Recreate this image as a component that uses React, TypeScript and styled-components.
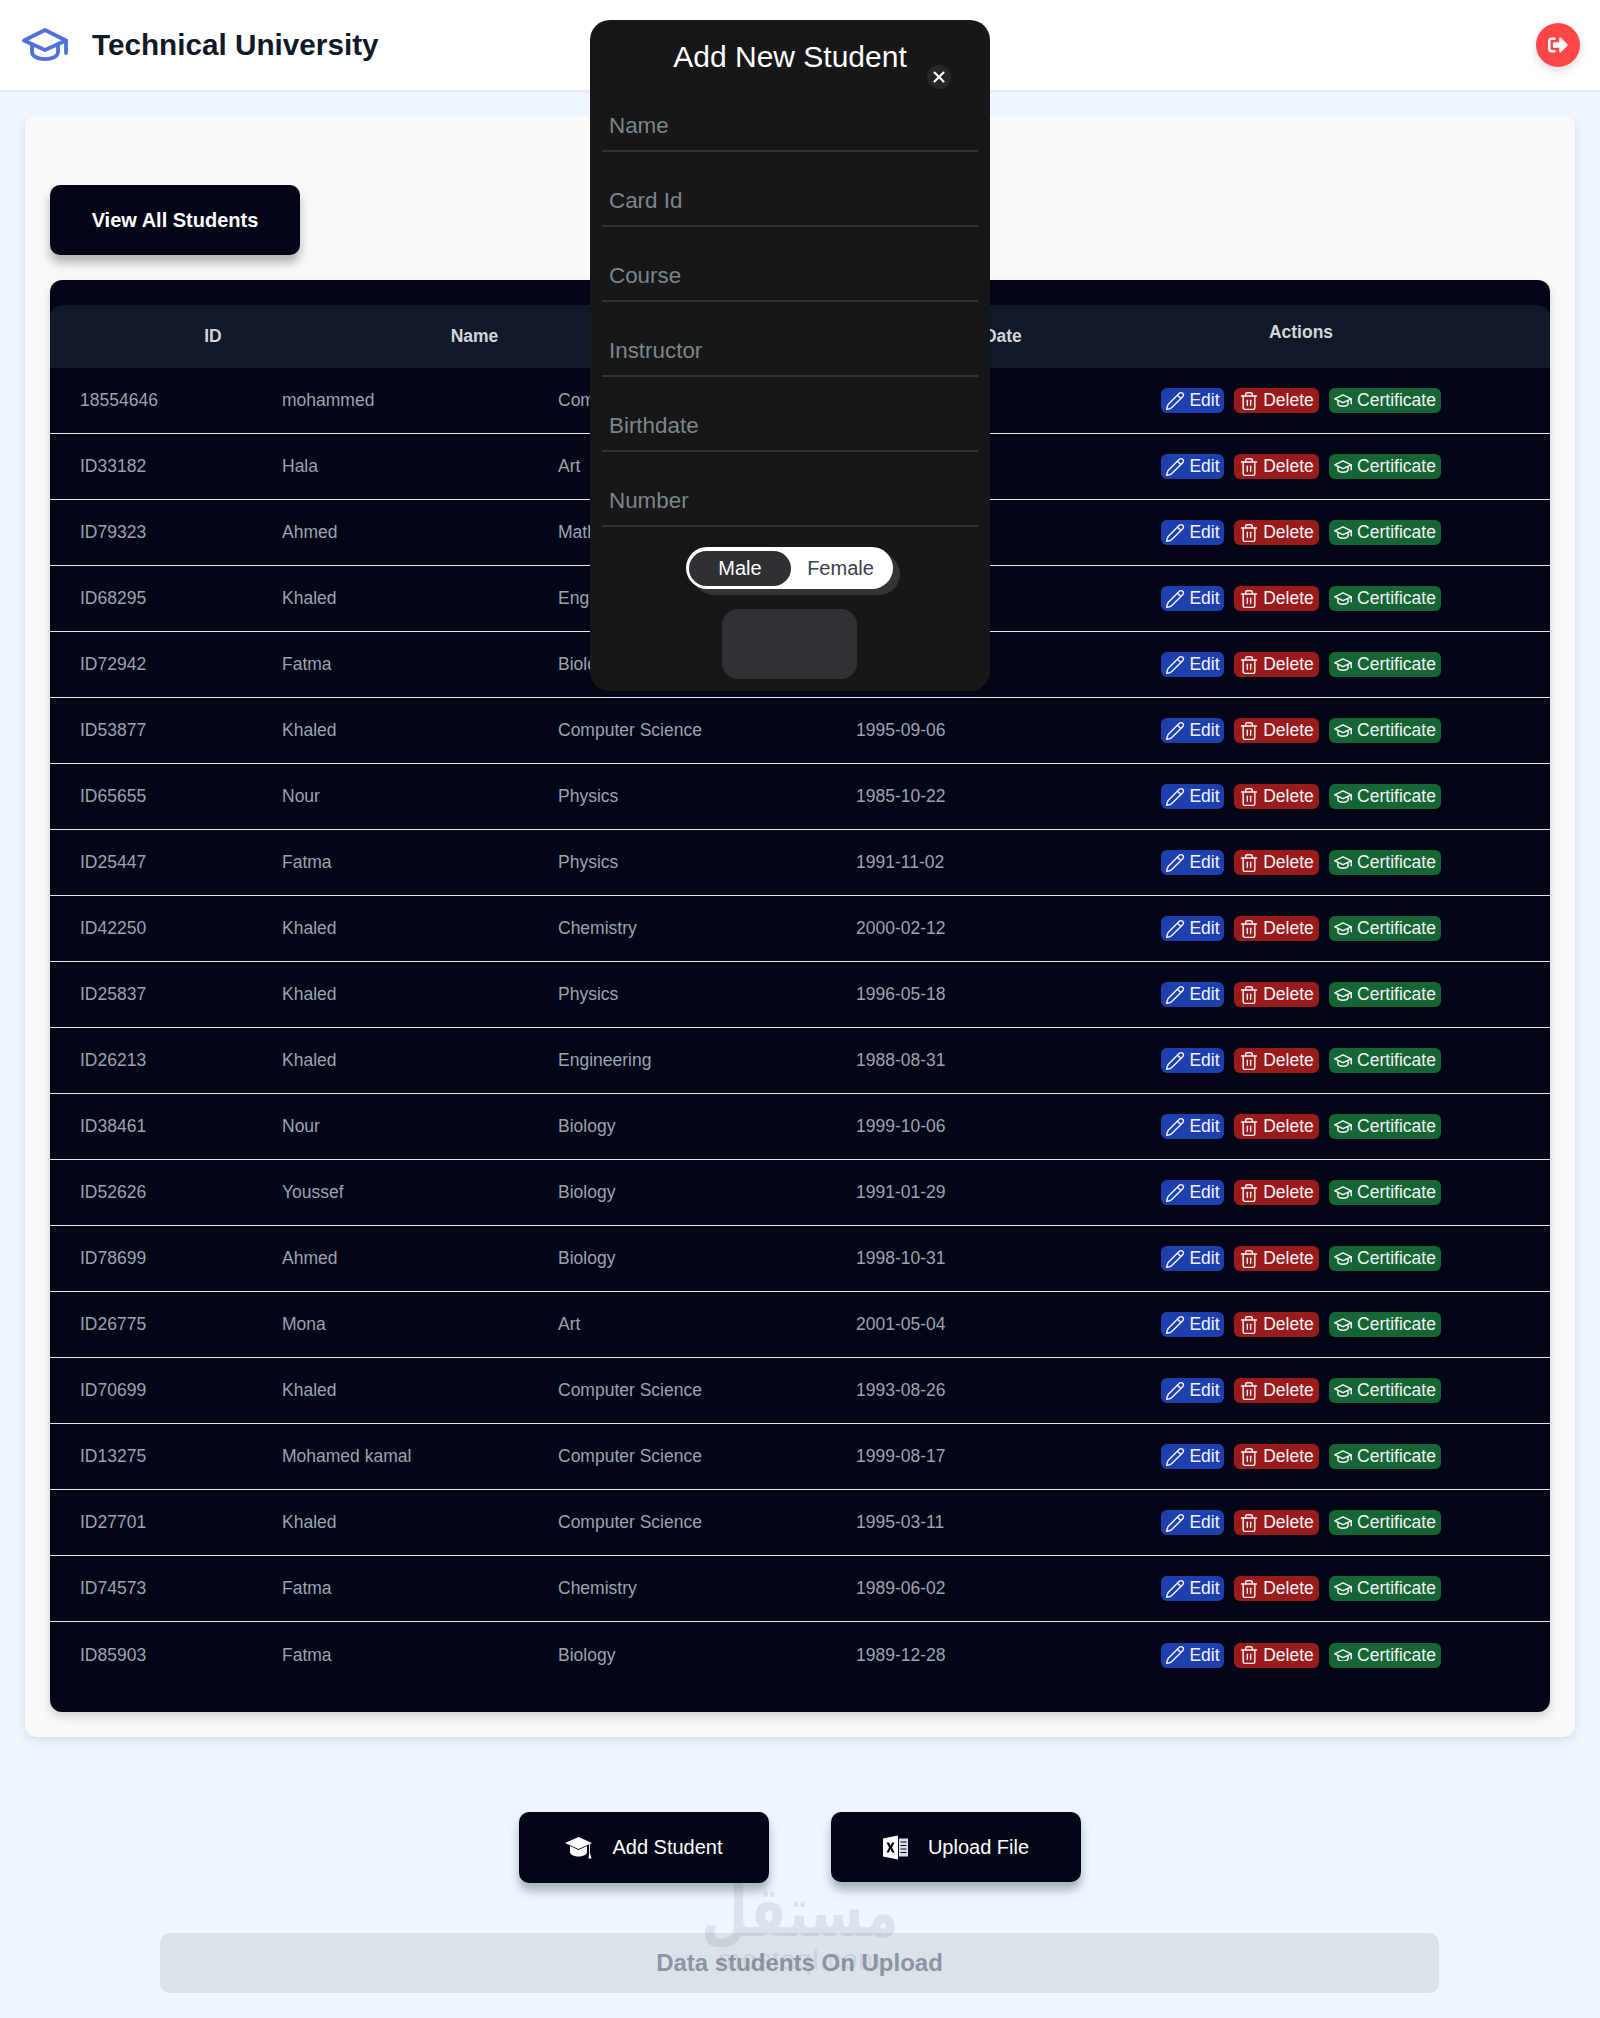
import React from 'react';
import styled, { createGlobalStyle } from 'styled-components';
import { Pencil, Trash2, X } from 'lucide-react';
import { FaSignOutAlt } from 'react-icons/fa';

const GlobalStyle = createGlobalStyle`
    html, body {
        margin: 0;
        padding: 0;
        background: #eff6ff;
        font-family: 'Liberation Sans', Arial, sans-serif;
    }
    * {
        box-sizing: border-box;
    }
`;

const Page = styled.div`
    position: relative;
    width: 1600px;
    height: 2018px;
    overflow: hidden;
    background: #eff6ff;
`;

const Header = styled.header`
    height: 90px;
    display: flex;
    align-items: center;
    justify-content: space-between;
    padding: 0 20px 0 22px;
    background: #ffffff;
    box-shadow: 0 1px 3px rgba(100, 120, 160, 0.16);
`;

const Brand = styled.div`
    display: flex;
    align-items: center;
    gap: 24px;
    color: #111827;
    font-size: 29.7px;
    font-weight: 700;
`;

const LogoutButton = styled.button`
    width: 44px;
    height: 44px;
    display: flex;
    align-items: center;
    justify-content: center;
    padding: 0;
    border: 0;
    border-radius: 50%;
    color: #ffffff;
    font-size: 20px;
    background: #ff4649;
    box-shadow: 0 4px 8px rgba(0, 0, 0, 0.14);
`;

const Main = styled.main`
    padding: 25px 25px 0;
`;

const Card = styled.section`
    padding: 70px 25px 25px;
    border-radius: 12px;
    background: #f9f9f9;
    box-shadow: 0 4px 10px rgba(30, 60, 110, 0.12);
`;

const DarkButton = styled.button<{ $height?: number }>`
    width: 250px;
    height: ${(p) => p.$height || 70}px;
    display: flex;
    align-items: center;
    justify-content: center;
    border: 0;
    border-radius: 10px;
    color: #ffffff;
    font-family: inherit;
    font-size: 20px;
    background: #020617;
    box-shadow: 0 8px 10px rgba(40, 50, 60, 0.34);
`;

const ViewAllButton = styled(DarkButton)`
    font-weight: 700;
`;

const TableBox = styled.div`
    margin-top: 25px;
    padding: 25px 0 24px;
    border-radius: 12px;
    background: #020617;
    box-shadow: 0 5px 10px rgba(0, 0, 0, 0.16);
`;

const HeadRow = styled.div`
    height: 63px;
    display: grid;
    grid-template-columns: 326px 197px 290px 234px 408px;
    align-items: center;
    border-radius: 12px 12px 0 0;
    color: #d1d5db;
    font-size: 17.5px;
    font-weight: 700;
    background: #111827;
`;

const HeadCell = styled.div<{ $raised?: boolean }>`
    text-align: center;
    padding-bottom: ${(p) => (p.$raised ? 8 : 0)}px;
`;

const Row = styled.div<{ $last: boolean }>`
    height: 66px;
    display: grid;
    grid-template-columns: 202px 276px 298px 305px 1fr;
    align-items: center;
    border-bottom: ${(p) => (p.$last ? '0' : '1px solid #e5e7eb')};
    color: #9ca3af;
    font-size: 17.5px;
`;

const Cell = styled.div`
    padding-left: 30px;
    white-space: nowrap;
`;

const Actions = styled(Cell)`
    display: flex;
    gap: 10px;
`;

const ActionButton = styled.span<{ $bg: string; $width: number; $gap?: number }>`
    width: ${(p) => p.$width}px;
    height: 25px;
    display: flex;
    align-items: center;
    justify-content: center;
    gap: ${(p) => p.$gap || 4}px;
    border-radius: 6px;
    color: #f3f4f6;
    background: ${(p) => p.$bg};
`;

const BottomButtons = styled.div`
    display: flex;
    justify-content: center;
    align-items: flex-start;
    gap: 62px;
    margin-top: 75px;
`;

const IconLabel = styled.span`
    display: flex;
    align-items: center;
    gap: 20px;
`;

const StatusBar = styled.div`
    width: 1279px;
    height: 60px;
    display: flex;
    align-items: center;
    justify-content: center;
    margin: 50px 0 0 160px;
    border-radius: 10px;
    color: #8b95a3;
    font-size: 24px;
    font-weight: 700;
    background: #dce2ea;
`;

const Watermark = styled.div`
    position: absolute;
    left: 690px;
    top: 1878px;
    width: 220px;
    color: #6b7280;
    text-align: center;
    opacity: 0.14;
    pointer-events: none;
`;

const WatermarkWord = styled.div`
    font-family: 'DejaVu Sans', sans-serif;
    font-size: 54px;
    font-weight: 700;
    line-height: 70px;
    transform: scaleY(1.3);
`;

const WatermarkUrl = styled.div`
    font-size: 27px;
    letter-spacing: 1px;
    line-height: 24px;
`;

const Modal = styled.div`
    position: absolute;
    left: 590px;
    top: 20px;
    width: 400px;
    height: 671px;
    padding: 0 12px;
    border-radius: 20px;
    background: #171717;
`;

const ModalTitle = styled.h2`
    margin: 0;
    padding-top: 20px;
    height: 57px;
    color: #ffffff;
    font-size: 30px;
    font-weight: 400;
    line-height: 34px;
    text-align: center;
`;

const CloseButton = styled.span`
    position: absolute;
    left: 337px;
    top: 45px;
    width: 24px;
    height: 24px;
    display: flex;
    align-items: center;
    justify-content: center;
    border-radius: 50%;
    color: #ffffff;
    background: #26262a;
`;

const Field = styled.div`
    height: 75px;
    display: flex;
    align-items: flex-end;
    padding: 0 7px 10px;
    border-bottom: 2px solid #333333;
    color: #7b868c;
    font-size: 22.4px;
    line-height: 28px;
`;

const GenderToggle = styled.div`
    width: 207px;
    height: 42px;
    display: flex;
    align-items: center;
    margin: 20px 0 0 84px;
    padding: 0 3px;
    border-radius: 21px;
    background: #ffffff;
    box-shadow: 7px 6px 0 #333436;
`;

const GenderOption = styled.span<{ $active?: boolean }>`
    height: 35px;
    display: flex;
    align-items: center;
    justify-content: center;
    flex: ${(p) => (p.$active ? '0 0 102px' : '1')};
    border-radius: 18px;
    color: ${(p) => (p.$active ? '#ffffff' : '#374151')};
    font-size: 20px;
    background: ${(p) => (p.$active ? '#2f3033' : 'transparent')};
`;

const SubmitButton = styled.div`
    width: 135px;
    height: 70px;
    margin: 20px 0 0 120px;
    border-radius: 16px;
    background: #303134;
`;

const CapOutline = ({ size, width, color }: { size: number; width: number; color: string }) => (
    <svg width={size} height={size * 0.72} viewBox="0 0 46 33" fill="none" stroke={color} strokeWidth={width} strokeLinecap="round" strokeLinejoin="round">
        <path d="M23 2 L44 12.5 L23 22 L2 12.5 Z" />
        <path d="M10 17 V24 C10 28.5 16 31 23 31 C30 31 36 28.5 36 24 V17" />
        <path d="M44 12.5 V25" />
    </svg>
);

const CapSolid = () => (
    <svg width="27" height="22" viewBox="0 0 27 22" fill="#ffffff">
        <path d="M13.5 0 L27 6 L13.5 12 L0 6 Z" />
        <path d="M5 9 L13.5 13 L22 9 V15 C22 18 17 19.5 13.5 19.5 C10 19.5 5 18 5 15 Z" />
        <path d="M24 7.5 L25 7 V16 L26.5 21.5 H23.5 L24.2 16 Z" />
    </svg>
);

const ExcelIcon = () => (
    <svg width="25" height="25" viewBox="0 0 25 25">
        <path d="M0 3.5 L15 0.5 V24.5 L0 21.5 Z" fill="#ffffff" />
        <path d="M3.5 7.5 H6.2 L7.6 10.8 L9.1 7.5 H11.6 L9 12.4 L11.7 17.5 H9 L7.5 14.1 L5.9 17.5 H3.4 L6.1 12.4 Z" fill="#020617" />
        <rect x="16" y="3.5" width="9" height="18" fill="#d9dde3" />
        <path d="M17.5 7 H23.5 M17.5 10.5 H23.5 M17.5 14 H23.5 M17.5 17.5 H23.5" stroke="#020617" strokeWidth="1.2" />
    </svg>
);

const students = [
    ['18554646', 'mohammed', 'Computer Science', '1990-04-12'],
    ['ID33182', 'Hala', 'Art', '1994-07-21'],
    ['ID79323', 'Ahmed', 'Mathematics', '1987-03-15'],
    ['ID68295', 'Khaled', 'Engineering', '1992-12-09'],
    ['ID72942', 'Fatma', 'Biology', '1997-06-30'],
    ['ID53877', 'Khaled', 'Computer Science', '1995-09-06'],
    ['ID65655', 'Nour', 'Physics', '1985-10-22'],
    ['ID25447', 'Fatma', 'Physics', '1991-11-02'],
    ['ID42250', 'Khaled', 'Chemistry', '2000-02-12'],
    ['ID25837', 'Khaled', 'Physics', '1996-05-18'],
    ['ID26213', 'Khaled', 'Engineering', '1988-08-31'],
    ['ID38461', 'Nour', 'Biology', '1999-10-06'],
    ['ID52626', 'Youssef', 'Biology', '1991-01-29'],
    ['ID78699', 'Ahmed', 'Biology', '1998-10-31'],
    ['ID26775', 'Mona', 'Art', '2001-05-04'],
    ['ID70699', 'Khaled', 'Computer Science', '1993-08-26'],
    ['ID13275', 'Mohamed kamal', 'Computer Science', '1999-08-17'],
    ['ID27701', 'Khaled', 'Computer Science', '1995-03-11'],
    ['ID74573', 'Fatma', 'Chemistry', '1989-06-02'],
    ['ID85903', 'Fatma', 'Biology', '1989-12-28'],
];

const fields = ['Name', 'Card Id', 'Course', 'Instructor', 'Birthdate', 'Number'];

const App = () => (
    <Page>
        <GlobalStyle />
        <Header>
            <Brand>
                <CapOutline size={46} width={3.8} color="#4f71d9" />
                Technical University
            </Brand>
            <LogoutButton>
                <FaSignOutAlt />
            </LogoutButton>
        </Header>
        <Main>
            <Card>
                <ViewAllButton>View All Students</ViewAllButton>
                <TableBox>
                    <HeadRow>
                        <HeadCell>ID</HeadCell>
                        <HeadCell>Name</HeadCell>
                        <HeadCell>Course</HeadCell>
                        <HeadCell>Birth Date</HeadCell>
                        <HeadCell $raised>Actions</HeadCell>
                    </HeadRow>
                    {students.map((s, i) => (
                        <Row key={s[0]} $last={i === students.length - 1}>
                            <Cell>{s[0]}</Cell>
                            <Cell>{s[1]}</Cell>
                            <Cell>{s[2]}</Cell>
                            <Cell>{s[3]}</Cell>
                            <Actions>
                                <ActionButton $bg="#1e40af" $width={63}>
                                    <Pencil size={20} strokeWidth={1.7} />
                                    Edit
                                </ActionButton>
                                <ActionButton $bg="#991b1b" $width={85}>
                                    <Trash2 size={20} strokeWidth={1.7} />
                                    Delete
                                </ActionButton>
                                <ActionButton $bg="#166534" $width={112} $gap={5}>
                                    <CapOutline size={18} width={3.8} color="#f3f4f6" />
                                    Certificate
                                </ActionButton>
                            </Actions>
                        </Row>
                    ))}
                </TableBox>
            </Card>
            <BottomButtons>
                <DarkButton $height={71}>
                    <IconLabel>
                        <CapSolid />
                        Add Student
                    </IconLabel>
                </DarkButton>
                <DarkButton>
                    <IconLabel>
                        <ExcelIcon />
                        Upload File
                    </IconLabel>
                </DarkButton>
            </BottomButtons>
        </Main>
        <StatusBar>Data students On Upload</StatusBar>
        <Watermark>
            <WatermarkWord>مستقل</WatermarkWord>
            <WatermarkUrl>mostaql.com</WatermarkUrl>
        </Watermark>
        <Modal>
            <ModalTitle>Add New Student</ModalTitle>
            <CloseButton>
                <X size={18} strokeWidth={2.8} />
            </CloseButton>
            {fields.map((f) => (
                <Field key={f}>{f}</Field>
            ))}
            <GenderToggle>
                <GenderOption $active>Male</GenderOption>
                <GenderOption>Female</GenderOption>
            </GenderToggle>
            <SubmitButton />
        </Modal>
    </Page>
);

export default App;
